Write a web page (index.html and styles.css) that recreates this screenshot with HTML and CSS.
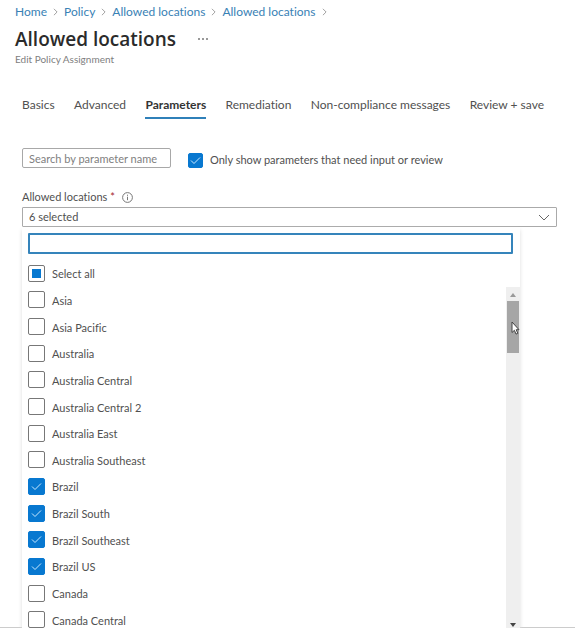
FILE: index.html
```html
<!DOCTYPE html>
<html lang="en">
<head>
<meta charset="utf-8">
<meta name="viewport" content="width=device-width, initial-scale=1">
<title>Allowed locations</title>
<link rel="stylesheet" href="styles.css">
</head>
<body>
<div class="page">
  <nav class="crumbs" aria-label="Breadcrumb">
    <a href="#">Home</a><svg class="sep" viewBox="0 0 6 10"><path d="M1 1l4 4-4 4"/></svg>
    <a href="#">Policy</a><svg class="sep" viewBox="0 0 6 10"><path d="M1 1l4 4-4 4"/></svg>
    <a href="#">Allowed locations</a><svg class="sep" viewBox="0 0 6 10"><path d="M1 1l4 4-4 4"/></svg>
    <a href="#">Allowed locations</a><svg class="sep" viewBox="0 0 6 10"><path d="M1 1l4 4-4 4"/></svg>
  </nav>
  <header class="heading">
    <h1>Allowed locations</h1>
    <button class="more" type="button" aria-label="More"><svg viewBox="0 0 10 2"><path d="M0 0h2v2H0zM4 0h2v2H4zM8 0h2v2H8z"/></svg></button>
  </header>
  <p class="subtitle">Edit Policy Assignment</p>
  <nav class="tabs" aria-label="Sections">
    <a href="#">Basics</a>
    <a href="#">Advanced</a>
    <a href="#" class="active" aria-current="page">Parameters</a>
    <a href="#">Remediation</a>
    <a href="#">Non-compliance messages</a>
    <a href="#">Review + save</a>
  </nav>
  <div class="filters">
    <input class="search" type="text" placeholder="Search by parameter name" aria-label="Search by parameter name">
    <label class="only"><input class="check small" type="checkbox" checked><span>Only show parameters that need input or review</span></label>
  </div>
  <div class="field-label">
    <label for="locations">Allowed locations <span class="required">*</span></label>
    <svg class="info" viewBox="0 0 11 11"><circle cx="5.5" cy="5.5" r="4.9"/><path d="M5.5 4.7v3.5M5.5 2.7v1.1"/></svg>
  </div>
  <div class="picker">
    <select id="locations"><option>6 selected</option></select>
    <svg class="chevron" viewBox="0 0 12 7"><path d="M1 1l5 5 5-5"/></svg>
  </div>
  <section class="panel">
    <input class="panel-search" type="text" aria-label="Filter locations">
    <div class="options">
      <label class="option"><input class="check mixed" type="checkbox"><span>Select all</span></label>
      <label class="option"><input class="check" type="checkbox"><span>Asia</span></label>
      <label class="option"><input class="check" type="checkbox"><span>Asia Pacific</span></label>
      <label class="option"><input class="check" type="checkbox"><span>Australia</span></label>
      <label class="option"><input class="check" type="checkbox"><span>Australia Central</span></label>
      <label class="option"><input class="check" type="checkbox"><span>Australia Central 2</span></label>
      <label class="option"><input class="check" type="checkbox"><span>Australia East</span></label>
      <label class="option"><input class="check" type="checkbox"><span>Australia Southeast</span></label>
      <label class="option"><input class="check" type="checkbox" checked><span>Brazil</span></label>
      <label class="option"><input class="check" type="checkbox" checked><span>Brazil South</span></label>
      <label class="option"><input class="check" type="checkbox" checked><span>Brazil Southeast</span></label>
      <label class="option"><input class="check" type="checkbox" checked><span>Brazil US</span></label>
      <label class="option"><input class="check" type="checkbox"><span>Canada</span></label>
      <label class="option"><input class="check" type="checkbox"><span>Canada Central</span></label>
      <div class="scrollbar">
        <svg class="arrow up" viewBox="0 0 6 4"><path d="M0 4l3-4 3 4z"/></svg>
        <div class="thumb"></div>
        <svg class="arrow down" viewBox="0 0 6 4"><path d="M0 0h6L3 4z"/></svg>
        <svg class="cursor" viewBox="0 0 9 14"><path d="M1 1v10.5l2.4-2.2 1.6 3.8 1.8-.8-1.6-3.6H8z"/></svg>
      </div>
    </div>
  </section>
  <footer class="footer"></footer>
</div>
</body>
</html>
```
FILE: styles.css
```css
* {
  box-sizing: border-box;
}

body {
  margin: 0;
  background: #fff;
  color: #505050;
  font: 11px/16px Lato, "Open Sans", sans-serif;
  font-variant-ligatures: none;
}

input,
select,
button {
  margin: 0;
  font: inherit;
  color: inherit;
}

a {
  text-decoration: none;
}

svg {
  display: block;
  flex: none;
  fill: none;
}

.page {
  display: flex;
  flex-direction: column;
  height: 100vh;
  overflow: hidden;
  padding-top: 4px;
}

.crumbs {
  display: flex;
  align-items: center;
  gap: 6px;
  padding-left: 15px;
  font-size: 12px;
}

.crumbs a {
  color: #3981b5;
}

.sep {
  width: 5px;
  height: 8px;
  stroke: #8a8a8a;
}

.heading {
  display: flex;
  align-items: center;
  gap: 22px;
  padding: 5px 15px 0;
}

h1 {
  margin: 0;
  color: #2b2b2b;
  font-family: "Open Sans", sans-serif;
  font-size: 19px;
  font-weight: 600;
  line-height: 28px;
}

.more {
  padding: 0;
  border: 0;
  background: none;
}

.more svg {
  width: 10px;
  height: 2px;
  fill: #999;
}

.subtitle {
  margin: 0;
  padding-left: 15px;
  color: #808080;
  font-size: 10px;
  line-height: 12px;
}

.tabs {
  display: flex;
  justify-content: space-between;
  margin: 32px 31px 0 22px;
  font-size: 12px;
}

.tabs a {
  padding-bottom: 4px;
  border-bottom: 2px solid transparent;
  color: #505050;
  white-space: nowrap;
}

.tabs .active {
  border-color: #2f80b9;
  color: #333;
  font-weight: 700;
}

.filters {
  display: flex;
  align-items: center;
  gap: 17px;
  margin: 29px 18px 0 22px;
}

.search {
  width: 149px;
  height: 20px;
  padding: 0 6px;
  border: 1px solid #a8a8a8;
  border-radius: 2px;
}

.search::placeholder {
  color: #808080;
  opacity: 1;
}

.only {
  display: flex;
  align-items: center;
  gap: 7px;
  padding-top: 4px;
}

.check {
  flex: none;
  width: 17px;
  height: 17px;
  appearance: none;
  border: 1px solid #777;
  border-radius: 2px;
  background: #fff center / 11px 9px no-repeat;
}

.check.small {
  width: 15px;
  height: 15px;
}

.check:checked {
  border-color: #0878d0;
  background-color: #0878d0;
  background-image: url("data:image/svg+xml,%3Csvg xmlns='http://www.w3.org/2000/svg' viewBox='0 0 11 9'%3E%3Cpath d='M1 4.5l3 3L10 1.5' fill='none' stroke='%23c9e8ff'/%3E%3C/svg%3E");
}

.check.mixed {
  border-color: #777;
  background: linear-gradient(#0878d0, #0878d0) center / 9px 9px no-repeat;
}

.field-label {
  display: flex;
  align-items: center;
  gap: 7px;
  margin: 21px 18px 0 22px;
}

.required {
  color: #a4262c;
}

.info {
  width: 11px;
  height: 11px;
  stroke: #777;
}

.picker {
  display: grid;
  align-items: center;
  margin: 2px 18px 0 22px;
}

.picker > * {
  grid-area: 1 / 1;
}

.picker select {
  width: 100%;
  height: 20px;
  padding: 0 6px;
  appearance: none;
  border: 1px solid #aaa;
  border-radius: 1px;
  background: #fff;
}

.chevron {
  justify-self: end;
  width: 12px;
  height: 7px;
  margin-right: 7px;
  stroke: #666;
  pointer-events: none;
}

.panel {
  display: flex;
  flex: 1;
  flex-direction: column;
  z-index: 1;
  min-height: 0;
  margin: 0 55px -6px 22px;
  padding: 6px 0 0 6px;
  background: #fff;
  box-shadow: 0 3px 4px #ddd;
}

.panel-search {
  height: 21px;
  margin-right: 7px;
  padding: 0 6px;
  border: 2px solid #3584bb;
  border-radius: 1px;
}

.options {
  display: grid;
  flex: 1;
  grid-template-columns: 1fr 14px;
  grid-template-rows: repeat(14, 1fr);
  min-height: 0;
  margin-top: 6px;
}

.option {
  display: flex;
  grid-column: 1;
  align-items: center;
  gap: 7px;
  min-height: 0;
}

.option span {
  padding-top: 2px;
}

.scrollbar {
  display: flex;
  flex-direction: column;
  grid-row: 2 / 15;
  grid-column: 2;
  align-items: center;
  position: relative;
  padding: 6px 0;
  background: #efefef;
}

.arrow {
  width: 6px;
  height: 4px;
}

.up {
  fill: #999;
}

.down {
  margin-top: auto;
  fill: #444;
}

.thumb {
  width: 12px;
  height: 52px;
  margin-top: 4px;
  background: #a6a6a6;
}

.cursor {
  position: absolute;
  top: 34px;
  left: 5px;
  width: 9px;
  height: 14px;
  fill: #fff;
  stroke: #444;
}

.footer {
  flex: none;
  height: 1px;
  background: #ccc;
}
```
